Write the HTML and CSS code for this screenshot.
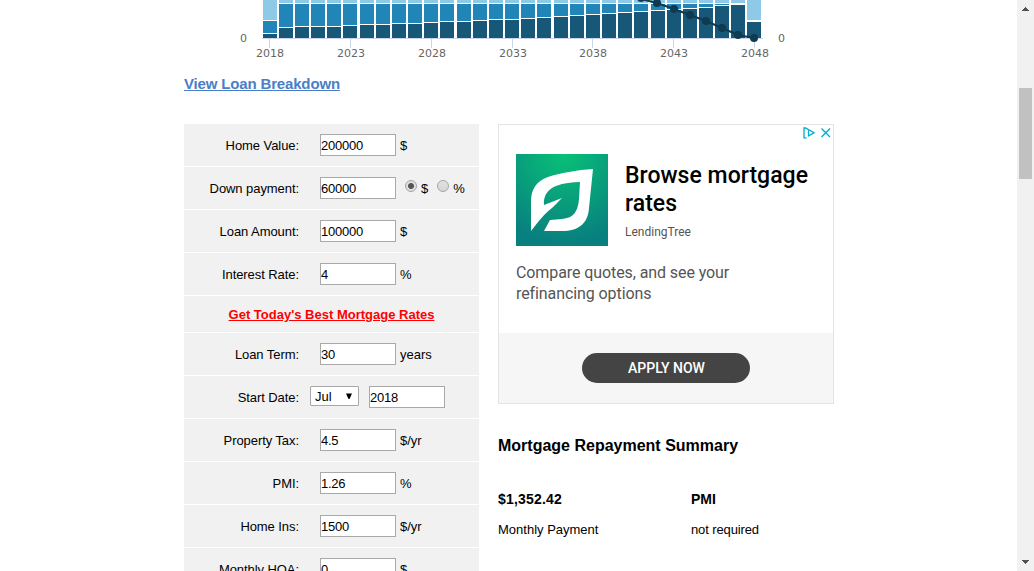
FILE: index.html
```html
<!DOCTYPE html>
<html lang="en">
<head>
<meta charset="utf-8">
<title>Mortgage Calculator</title>
<link rel="stylesheet" href="styles.css">
</head>
<body>
<div class="viewport">
<main class="content">
  <svg class="chart" width="620" height="64" viewBox="184 0 620 64">
    <g id="bars" shape-rendering="crispEdges"></g>
    <path d="M262 38.5H763M269.5 39V48M350.500 39V48M431.500 39V48M512.500 39V48M592.500 39V48M673.500 39V48M754.500 39V48" stroke="#ccd6eb" fill="none"/>
    <polyline points="625,-6 641,-1 657,3 674,9 690,15 706,21 722,28 738,35 754,38" fill="none" stroke="#0f3a4f" stroke-width="2"/>
    <g fill="#0f3a4f"><circle cx="641" cy="-2" r="4"/><circle cx="657" cy="3" r="4"/><circle cx="674" cy="9" r="4"/><circle cx="690" cy="15" r="4"/><circle cx="706" cy="21" r="4"/><circle cx="722" cy="28" r="4"/><circle cx="738" cy="35" r="4"/><circle cx="754" cy="38" r="4"/></g>
    <g class="axis">
      <text x="243.500" y="42">0</text><text x="781.500" y="42">0</text>
      <text x="270" y="57">2018</text><text x="351" y="57">2023</text><text x="432" y="57">2028</text><text x="513" y="57">2033</text><text x="593" y="57">2038</text><text x="674" y="57">2043</text><text x="755" y="57">2048</text>
    </g>
  </svg>
  <a class="breakdown">View Loan Breakdown</a>
  <div class="columns">
    <form class="form">
      <div class="row"><label>Home Value:</label><input value="200000"><span>$</span></div>
      <div class="row"><label>Down payment:</label><input value="60000"><i class="radio on"></i><span class="opt">$</span><i class="radio second"></i><span class="opt">%</span></div>
      <div class="row"><label>Loan Amount:</label><input value="100000"><span>$</span></div>
      <div class="row"><label>Interest Rate:</label><input value="4"><span>%</span></div>
      <div class="row promo"><a>Get Today's Best Mortgage Rates</a></div>
      <div class="row"><label>Loan Term:</label><input value="30"><span>years</span></div>
      <div class="row date"><label>Start Date:</label><div class="select">Jul<svg width="8" height="7" viewBox="0 0 8 7"><path d="M1 0.500H7L4.500 6H3.500Z" fill="#000"/></svg></div><input value="2018"></div>
      <div class="row"><label>Property Tax:</label><input value="4.5"><span>$/yr</span></div>
      <div class="row"><label>PMI:</label><input value="1.26"><span>%</span></div>
      <div class="row"><label>Home Ins:</label><input value="1500"><span>$/yr</span></div>
      <div class="row"><label>Monthly HOA:</label><input value="0"><span>$</span></div>
    </form>
    <section class="side">
      <div class="ad">
        <svg class="adchoices" width="28" height="12" viewBox="0 0 28 12" fill="none" stroke="#00aecd" stroke-width="1.300"><path d="M3.500 10.800H1V1H2.500L11 5.700L5.500 8.800V3.500"/><path d="M18.500 1.500L27 10M27 1.500L18.500 10" stroke-width="1.400"/></svg>
        <div class="ad-head">
          <svg width="92" height="92" viewBox="0 0 92 92">
            <defs><radialGradient id="g" gradientUnits="userSpaceOnUse" cx="48" cy="0" r="88"><stop offset="0" stop-color="#08c177"/><stop offset="1" stop-color="#08807f"/></radialGradient></defs>
            <rect width="92" height="92" fill="url(#g)"/>
            <path fill="#fff" fill-rule="evenodd" d="M77 15C61 16 44 19 32 23C20 27 15 36 15 47V77C22 68 29 59 36 54C40 50 43 47 46 44L28 51C27 42 32 35 40 32C48 29 56 28 64 28L63 45C62 57 58 64 46 65L34 66L28 77H46C62 77 72 70 73 54Z"/>
          </svg>
          <div><h2>Browse mortgage<br>rates</h2><p class="brand">LendingTree</p></div>
        </div>
        <p class="copy">Compare quotes, and see your<br>refinancing options</p>
        <div class="ad-foot"><a class="apply">APPLY NOW</a></div>
      </div>
      <h3>Mortgage Repayment Summary</h3>
      <dl class="summary">
        <div><dt class="amount">$1,352.42</dt><dd>Monthly Payment</dd></div>
        <div><dt>PMI</dt><dd class="note">not required</dd></div>
      </dl>
    </section>
  </div>
</main>
<aside class="scrollbar">
  <svg width="7" height="4" viewBox="0 0 7 4" shape-rendering="crispEdges"><path d="M3 0H4V1H5V2H6V3H7V4H0V3H1V2H2V1H3Z" fill="#505050"/></svg>
  <div class="thumb"></div>
  <svg class="down" width="7" height="4" viewBox="0 0 7 4" shape-rendering="crispEdges"><path d="M0 0H7V1H6V2H5V3H4V4H3V3H2V2H1V1H0Z" fill="#505050"/></svg>
</aside>
</div>
<script src="chart.js"></script>
</body>
</html>
```
FILE: styles.css
```css
* { box-sizing: border-box; }
body { margin: 0; background: #fff; color: #000; font: 13px/16px "Liberation Sans", Arial, sans-serif; overflow: hidden; }
h2, h3, p, dl, dt, dd { margin: 0; }
.viewport { display: flex; width: 1034px; height: 571px; overflow: hidden; }
.content { flex: 1; padding-left: 184px; }
.chart { display: block; }
.axis text { font: 11px "DejaVu Sans", Verdana, sans-serif; fill: #666; text-anchor: middle; }
.breakdown { display: block; width: max-content; margin-top: 11px; font-size: 15px; line-height: 18px; font-weight: bold; letter-spacing: -0.16px; color: #4a7ec8; text-decoration: underline; }
.columns { display: flex; gap: 19px; margin-top: 31px; }
.form { width: 295px; display: flex; flex-direction: column; gap: 1px; }
.row { display: flex; flex: none; height: 42px; padding-top: 10px; background: #f1f1f1; line-height: 23px; }
.row label { width: 115px; margin-right: 21px; text-align: right; letter-spacing: -0.07px; }
.row input { width: 76px; height: 22px; padding: 1px 0 0; border: 1px solid #a9a9a9; border-radius: 0; background: #fff; font: 13px "Liberation Sans", Arial, sans-serif; letter-spacing: -0.25px; outline: 0; }
.row span { margin-left: 4px; }
.row .opt { margin-left: 4px; }
.radio { width: 12px; height: 12px; margin: 3px 0 0 9px; border: 1px solid #a5a5a5; border-radius: 50%; background: linear-gradient(#e2e2e2, #d6d6d6); }
.radio.second { margin-left: 9px; }
.radio.on { background: radial-gradient(circle, #555 0 2.5px, #e0e0e0 3.500px); }
.promo { height: 36px; justify-content: center; padding-top: 7px; }
.promo a { color: #f00; font-weight: bold; text-decoration: underline; }
.date label { margin-right: 11px; }
.select { display: flex; justify-content: space-between; align-items: center; width: 49px; height: 20px; margin-right: 10px; padding: 1px 5px 0 4px; border: 1px solid #a9a9a9; border-radius: 1px; background: #fff; }
.side { width: 336px; }
.ad { position: relative; height: 280px; display: flex; flex-direction: column; border: 1px solid #e4e4e4; font-family: Roboto, sans-serif; }
.adchoices { position: absolute; top: 2px; right: 2px; }
.ad-head { display: flex; gap: 17px; padding: 29px 0 0 17px; }
.ad-head h2 { margin-top: 8px; font-size: 23px; line-height: 28px; font-weight: 500; letter-spacing: 0.03px; }
.brand { margin-top: 6px; font-size: 12px; line-height: 16px; color: #555; }
.copy { margin: 16px 0 0 17px; font-size: 16px; line-height: 21px; letter-spacing: -0.09px; color: #555; }
.ad-foot { flex: none; height: 70px; margin-top: auto; padding-top: 20px; background: #f6f6f6; }
.apply { display: block; width: 168px; height: 30px; margin: 0 auto; border-radius: 15px; background: #444; color: #fff; font-size: 14px; font-weight: 500; line-height: 31px; text-align: center; text-indent: 1px; }
.side h3 { margin-top: 33px; font-size: 16px; line-height: 18px; }
.summary { display: grid; grid-template-columns: 193px 1fr; margin-top: 36px; }
.summary dt { font-size: 14px; font-weight: bold; }
.summary .amount { letter-spacing: 0.18px; }
.summary dd { margin-top: 15px; }
.summary .note { letter-spacing: -0.12px; }
.scrollbar { display: flex; flex-direction: column; width: 17px; height: 571px; padding: 7px 0 7px 5px; background: #f1f1f1; }
.thumb { width: 13px; height: 91px; margin: 77px 0 0 -3px; background: #c1c1c1; }
.down { margin-top: auto; }
```
FILE: chart.js
```js
const xs = [263,279,295,311,327,343,360,376,392,408,424,440,457,473,489,505,521,537,554,570,586,602,618,634,651,667,683,699,715,731,747];
const principalTop = [34,28,27,27,27,26,25,25,24,24,23,22,22,21,20,20,19,18,17,16,15,14,13,12,11,10,9,8,6,5,22];
const bars = document.getElementById('bars');
function rect(x, top, bottom, fill) {
  if (bottom <= top) return;
  const r = document.createElementNS('http://www.w3.org/2000/svg', 'rect');
  r.setAttribute('x', x);
  r.setAttribute('y', top);
  r.setAttribute('width', 14);
  r.setAttribute('height', bottom - top);
  r.setAttribute('fill', fill);
  bars.appendChild(r);
}
xs.forEach((x, i) => {
  const partial = i === 0 || i === xs.length - 1;
  const taxBottom = partial ? 20 : 3;
  rect(x, 0, taxBottom, '#8ecae8');
  rect(x, taxBottom + 1, principalTop[i] - 1, '#2185b7');
  rect(x, principalTop[i], 38, '#175878');
});
```
